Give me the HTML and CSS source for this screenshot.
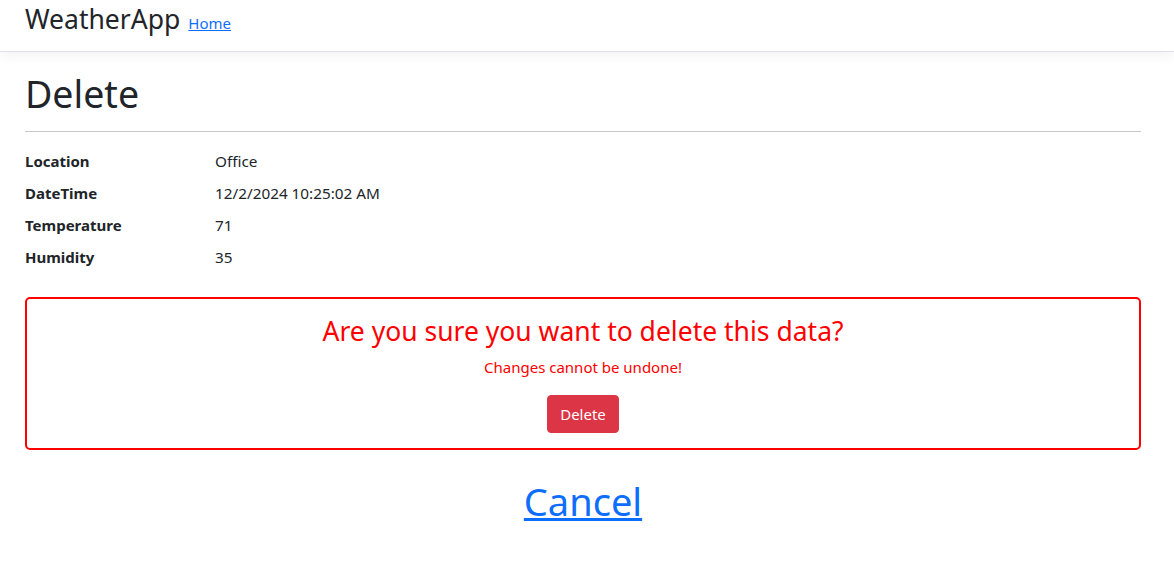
FILE: index.html
```html
<!DOCTYPE html>
<html>
<head>
<meta charset="utf-8">
<link rel="stylesheet" href="styles.css">
</head>
<body>
<header class="navbar">
  <div class="container nav-inner">
    <span class="brand">WeatherApp</span>
    <a class="nav-link" href="#">Home</a>
  </div>
</header>
<main class="container">
  <h1 class="title">Delete</h1>
  <hr class="rule">
  <dl class="details">
    <dt>Location</dt><dd>Office</dd>
    <dt>DateTime</dt><dd>12/2/2024 10:25:02 AM</dd>
    <dt>Temperature</dt><dd>71</dd>
    <dt>Humidity</dt><dd>35</dd>
  </dl>
  <section class="confirm">
    <h3 class="confirm-title">Are you sure you want to delete this data?</h3>
    <p class="confirm-note">Changes cannot be undone!</p>
    <button class="btn-danger" type="button">Delete</button>
  </section>
  <div class="cancel-wrap">
    <a class="cancel" href="#">Cancel</a>
  </div>
</main>
</body>
</html>
```
FILE: styles.css
```css
* { box-sizing: border-box; }
html, body { margin: 0; padding: 0; }
body {
  font-family: "Noto Sans", "Open Sans", sans-serif;
  font-size: 16px;
  line-height: 1.5;
  color: #212529;
  background: #fff;
}
.container {
  width: 1116px;
  margin-left: 25px;
}
.navbar {
  height: 52px;
  border-bottom: 1px solid #dee2e6;
  box-shadow: 0 4px 12px rgba(0,0,0,0.05);
}
.nav-inner {
  display: flex;
  align-items: baseline;
  gap: 8px;
  padding-top: 0;
}
.brand {
  font-size: 26.5px;
  color: #212529;
}
.nav-link {
  color: #0d6efd;
  font-size: 15px;
}
.title {
  font-size: 37.5px;
  font-weight: 400;
  line-height: 1.2;
  margin: 19px 0 15px;
}
.rule {
  border: 0;
  border-top: 1px solid #c8c8c8;
  margin: 0 0 17px;
}
.details {
  display: grid;
  grid-template-columns: 190px 1fr;
  margin: 0 0 20px;
  font-size: 15px;
  line-height: 24px;
}
.details dt { font-weight: 700; margin: 0 0 8px; }
.details dd { margin: 0 0 8px; font-size: 15.3px; }
.confirm {
  border: 2px solid #ff0000;
  border-radius: 5px;
  text-align: center;
  color: #ff0000;
  padding: 17px 0 15px;
  display: flex;
  flex-direction: column;
  align-items: center;
}
.confirm-title {
  font-size: 26.5px;
  font-weight: 400;
  line-height: 1.2;
  margin: 0 0 9px;
}
.confirm-note {
  font-size: 15px;
  line-height: 21px;
  margin: 0 0 17px;
}
.btn-danger {
  background: #dc3545;
  color: #fff;
  border: 1px solid #dc3545;
  border-radius: 4px;
  font-family: inherit;
  font-size: 15px;
  line-height: 1.5;
  padding: 6px 12px;
  height: 38px;
  width: 72px;
}
.cancel-wrap {
  text-align: center;
  margin-top: 23px;
}
.cancel {
  color: #0d6efd;
  font-size: 38px;
}
```
